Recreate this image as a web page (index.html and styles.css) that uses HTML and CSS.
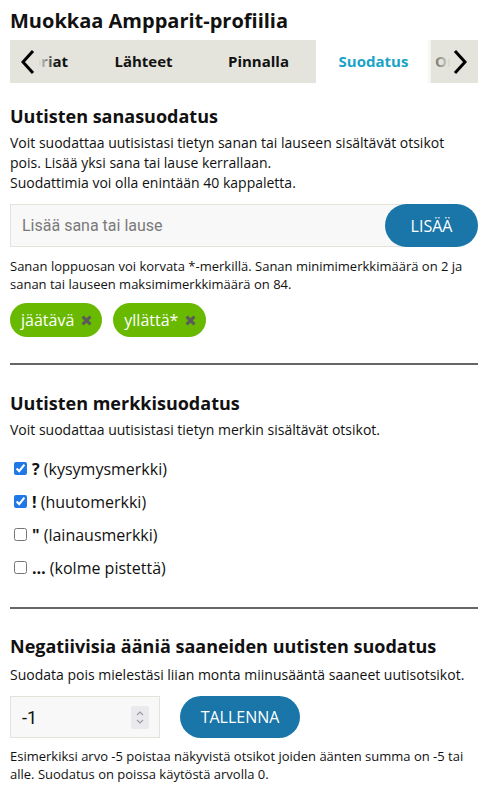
FILE: index.html
```html
<!DOCTYPE html>
<html lang="fi">
<head>
<meta charset="utf-8">
<title>Muokkaa Ampparit-profiilia</title>
<link rel="stylesheet" href="styles.css">
</head>
<body>
<h1 class="title">Muokkaa Ampparit-profiilia</h1>

<nav class="tabs">
  <div class="tab-track">
    <a class="tab">Kategoriat</a>
    <a class="tab">Lähteet</a>
    <a class="tab">Pinnalla</a>
    <a class="tab active">Suodatus</a>
    <a class="tab">Ominaisuudet</a>
  </div>
  <span class="arrow arrow-left">
    <svg width="16" height="26" viewBox="0 0 16 26"><path d="M13 2 L3 13 L13 24" fill="none" stroke="#000" stroke-width="3"/></svg>
  </span>
  <span class="arrow arrow-right">
    <svg width="16" height="26" viewBox="0 0 16 26"><path d="M3 2 L13 13 L3 24" fill="none" stroke="#000" stroke-width="3"/></svg>
  </span>
</nav>

<section class="block block-first">
  <h2 class="heading">Uutisten sanasuodatus</h2>
  <p class="lead">Voit suodattaa uutisistasi tietyn sanan tai lauseen sisältävät otsikot pois. Lisää yksi sana tai lause kerrallaan.<br>Suodattimia voi olla enintään 40 kappaletta.</p>
  <div class="add-row">
    <input class="word-input" type="text" placeholder="Lisää sana tai lause">
    <button class="btn btn-add">LISÄÄ</button>
  </div>
  <p class="hint">Sanan loppuosan voi korvata *-merkillä. Sanan minimimerkkimäärä on 2 ja sanan tai lauseen maksimimerkkimäärä on 84.</p>
  <div class="chips">
    <span class="chip">jäätävä <svg class="chip-x" width="11" height="11" viewBox="0 0 11 11"><path d="M1.6 1.6 L9.4 9.4 M9.4 1.6 L1.6 9.4" stroke="#5b5b5b" stroke-width="3.1"/></svg></span>
    <span class="chip">yllättä* <svg class="chip-x" width="11" height="11" viewBox="0 0 11 11"><path d="M1.6 1.6 L9.4 9.4 M9.4 1.6 L1.6 9.4" stroke="#5b5b5b" stroke-width="3.1"/></svg></span>
  </div>
</section>

<hr class="divider">

<section class="block">
  <h2 class="heading">Uutisten merkkisuodatus</h2>
  <p class="lead">Voit suodattaa uutisistasi tietyn merkin sisältävät otsikot.</p>
  <div class="checks">
    <label class="check"><input type="checkbox" checked><b class="mark">?</b> (kysymysmerkki)</label>
    <label class="check"><input type="checkbox" checked><b class="mark">!</b> (huutomerkki)</label>
    <label class="check"><input type="checkbox"><b class="mark">"</b> (lainausmerkki)</label>
    <label class="check"><input type="checkbox"><b class="mark">…</b> (kolme pistettä)</label>
  </div>
</section>

<hr class="divider divider-second">

<section class="block block-last">
  <h2 class="heading">Negatiivisia ääniä saaneiden uutisten suodatus</h2>
  <p class="lead lead-last">Suodata pois mielestäsi liian monta miinusääntä saaneet uutisotsikot.</p>
  <div class="save-row">
    <div class="num-box">
      <input class="num-input" type="text" value="-1">
      <svg class="spinner" width="18" height="23" viewBox="0 0 18 23"><rect width="18" height="23" rx="2" fill="#e9e9ee"/><path d="M6 9 L9 6 L12 9 M6 14 L9 17 L12 14" fill="none" stroke="#9a9aa0" stroke-width="1.2"/></svg>
    </div>
    <button class="btn btn-save">TALLENNA</button>
  </div>
  <p class="hint hint-last">Esimerkiksi arvo -5 poistaa näkyvistä otsikot joiden äänten summa on -5 tai alle. Suodatus on poissa käytöstä arvolla 0.</p>
</section>
</body>
</html>
```

FILE: styles.css
```css
* { box-sizing: border-box; }

body {
  margin: 0;
  padding: 0 10px;
  font-family: "Open Sans", "Noto Sans", sans-serif;
  color: #111;
  background: #fff;
}

.title {
  font-size: 20px;
  line-height: 28px;
  font-weight: 700;
  margin: 7px 0 5px;
}

.tabs {
  position: relative;
  overflow: hidden;
  height: 43px;
  background: #e4e4dc;
}

.tab-track {
  display: flex;
  margin-left: -39px;
}

.tab {
  flex: 0 0 115px;
  height: 43px;
  line-height: 43px;
  font-size: 15px;
  font-weight: 700;
  white-space: nowrap;
  color: #111;
  display: flex;
  justify-content: center;
}

.tab.active {
  background: #fff;
  color: #19a3c6;
}

.arrow {
  position: absolute;
  top: 0;
  height: 43px;
  width: 46px;
  display: flex;
  align-items: center;
}

.arrow-left {
  left: 0;
  padding-left: 10px;
  background: linear-gradient(to right, #e4e4dc 62%, rgba(228, 228, 220, 0));
}

.arrow-right {
  right: 0;
  width: 50px;
  justify-content: flex-end;
  padding-right: 10px;
  background: linear-gradient(to left, #e4e4dc 55%, rgba(228, 228, 220, 0.55) 80%, rgba(228, 228, 220, 0.3));
}

.block-first { margin-top: 21px; }

.heading {
  font-size: 18px;
  line-height: 24px;
  font-weight: 700;
  margin: 0 0 5px;
}

.lead {
  font-size: 14px;
  line-height: 20px;
  margin: 0;
}

.add-row {
  display: flex;
  margin-top: 11px;
  height: 43px;
}

.word-input {
  flex: 1;
  min-width: 0;
  height: 43px;
  border: 1px solid #e3e3dc;
  background: #f8f8f8;
  padding: 0 11px;
  font-family: Roboto, "Liberation Sans", sans-serif;
  font-size: 16px;
  color: #333;
  outline: none;
}

.word-input::placeholder { color: #7a7a7a; }

.btn {
  border: 0;
  background: #1a75a8;
  color: #fff;
  font-family: "Open Sans", sans-serif;
  font-size: 16px;
  height: 43px;
  border-radius: 22px;
  cursor: pointer;
}

.btn-add {
  width: 93px;
  margin-left: -22px;
  position: relative;
}

.hint {
  font-size: 13px;
  line-height: 18px;
  margin: 10px 0 0;
}

.chips {
  display: flex;
  gap: 11px;
  margin-top: 10px;
}

.chip {
  display: inline-flex;
  align-items: center;
  gap: 7px;
  height: 34px;
  padding: 0 10px 0 11px;
  border-radius: 17px;
  background: #69b900;
  color: #fff;
  font-size: 16px;
}

.chip-x { flex: none; }

.divider {
  border: 0;
  height: 2px;
  background: #666;
  margin: 26px 0 0;
}

.divider + .block { margin-top: 26px; }

.checks {
  margin-top: 12px;
  display: flex;
  flex-direction: column;
}

.check {
  height: 33px;
  display: flex;
  align-items: center;
  font-size: 16px;
  white-space: pre;
}

.check input {
  width: 13px;
  height: 13px;
  margin: 0 5px 0 4px;
  accent-color: #1f78e6;
}

.mark {
  font-weight: 700;
}

.divider-second { margin-top: 23px; }
.divider-second + .block { margin-top: 25px; }

.lead-last { margin-top: 7px; }

.save-row {
  display: flex;
  gap: 20px;
  margin-top: 11px;
}

.num-box {
  width: 150px;
  height: 42px;
  display: flex;
  align-items: center;
  border: 1px solid #e3e3dc;
  background: #f8f8f8;
  padding: 0 10px 0 11px;
}

.num-input {
  flex: 1;
  min-width: 0;
  border: 0;
  background: transparent;
  font-family: Roboto, "Liberation Sans", sans-serif;
  font-size: 18px;
  color: #111;
  outline: none;
  padding: 0;
}

.spinner { flex: none; }

.btn-save {
  width: 120px;
  height: 42px;
  border-radius: 21px;
}

.hint-last { margin-top: 9px; }
```
